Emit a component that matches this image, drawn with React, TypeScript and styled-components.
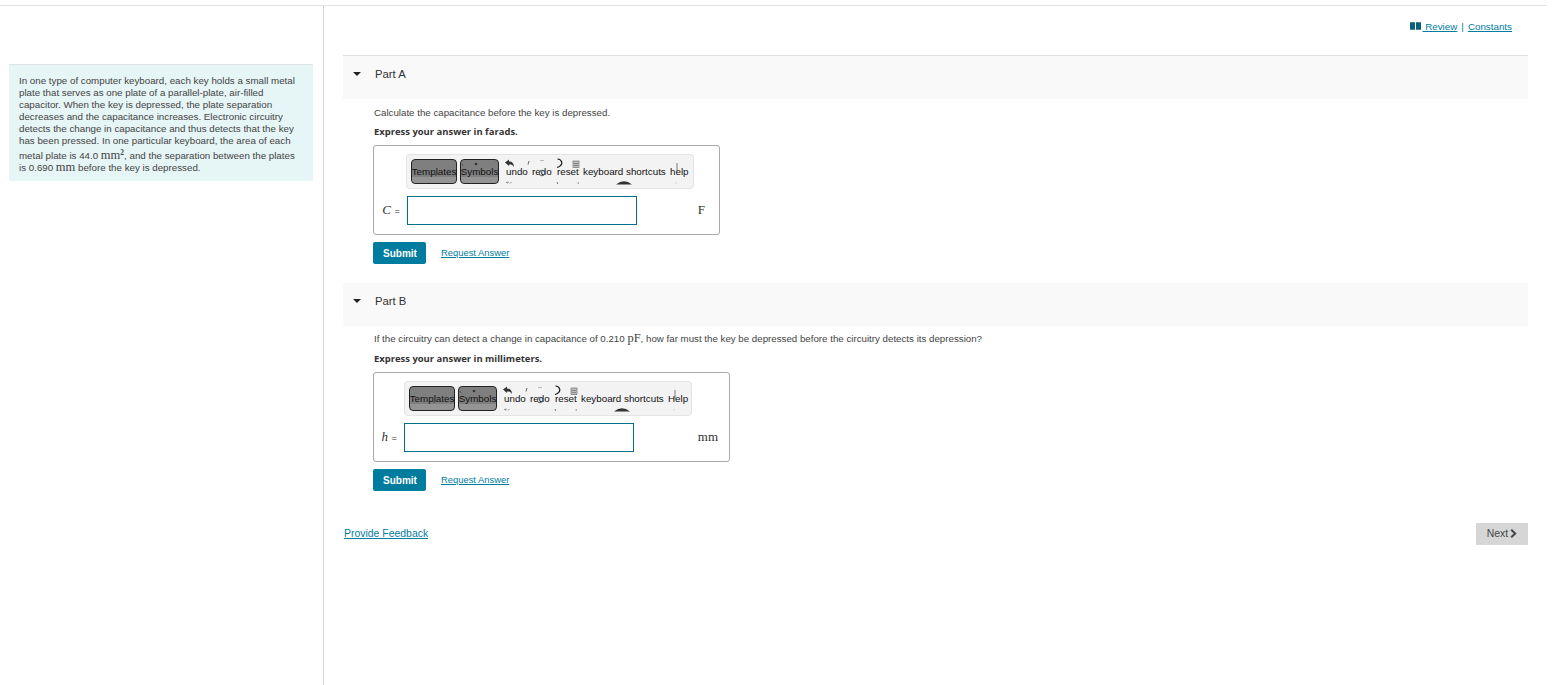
import React from "react";
import styled, { createGlobalStyle } from "styled-components";

const Global = createGlobalStyle`
  html, body { margin: 0; padding: 0; background: #fff; }
  body { font-family: "Liberation Sans", Arial, sans-serif; color: #333; overflow: hidden; }
`;

const Page = styled.div`
  margin-top: 5px;
  width: 1547px;
  height: 680px;
  border-top: 1px solid #e2e2e2;
  display: flex;
  box-sizing: border-box;
`;

const Sidebar = styled.aside`
  width: 324px;
  flex: none;
  box-sizing: border-box;
  border-right: 1px solid #cfd4da;
  padding: 58px 10px 0 9px;
`;

const Intro = styled.div`
  background: #e6f5f6;
  border-top: 1px solid #dfe5e6;
  padding: 10px 15px 0 10px;
  height: 117px;
  box-sizing: border-box;
  font-size: 9.75px;
  line-height: 12.1px;
  color: #444;
`;

const MathVar = styled.span`
  font-family: "Liberation Serif", "DejaVu Serif", serif;
  font-size: 12.5px;
  line-height: 0;
`;

const MathItalic = styled.i`
  font-family: "Liberation Serif", serif;
  font-size: 13px;
  color: #333;
  margin-right: 1px;
`;

const Sup = styled.sup`
  font-size: 7.5px;
  line-height: 10px;
  font-family: "Liberation Serif", serif;
  font-weight: bold;
`;

const Main = styled.main`
  flex: 1;
  min-width: 0;
  padding: 0 19px 0 19px;
`;

const TopLinks = styled.div`
  height: 49px;
  box-sizing: border-box;
  padding: 15px 16px 0 0;
  display: flex;
  justify-content: flex-end;
  align-items: flex-start;
  font-size: 9.8px;
  line-height: 12px;
  color: #007c9f;
`;

const LinkA = styled.a`
  color: #007c9f;
  text-decoration: underline;
  white-space: pre;
`;

const FeedbackLink = styled(LinkA)`
  margin-bottom: 2px;
`;

const Separator = styled.span`
  margin: 0 4px;
`;

const BookIcon = styled.svg`
  width: 11px;
  height: 8px;
  margin: 1px 1px 0 0;
  flex: none;
`;

const PartHeader = styled.div<{ $ruled?: boolean }>`
  height: ${(p) => (p.$ruled ? 44 : 43)}px;
  box-sizing: border-box;
  background: #f9f9f9;
  border-top: ${(p) => (p.$ruled ? "1px solid #e0e0e0" : "none")};
  display: flex;
  align-items: center;
  padding: 0 0 8px 10px;
  font-size: 11.3px;
  color: #333;
`;

const Caret = styled.span`
  width: 0;
  height: 0;
  border-left: 4px solid transparent;
  border-right: 4px solid transparent;
  border-top: 4px solid #222;
  margin-right: 14px;
`;

const PartBody = styled.section<{ $h: number; $top: number }>`
  padding: ${(p) => p.$top}px 0 0 30px;
  height: ${(p) => p.$h}px;
  box-sizing: border-box;
`;

const Prompt = styled.p`
  margin: 0;
  padding-left: 1px;
  font-size: 9.72px;
  line-height: 12px;
  color: #444;
`;

const Instruction = styled.p<{ $top: number }>`
  margin: ${(p) => p.$top}px 0 0;
  padding-left: 1px;
  font-family: "Open Sans", "Liberation Sans", sans-serif;
  font-weight: 700;
  font-size: 9.45px;
  line-height: 12px;
  color: #333;
`;

const AnswerBox = styled.div<{ $w: number }>`
  width: ${(p) => p.$w}px;
  height: 90px;
  margin-top: 7px;
  box-sizing: border-box;
  border: 1px solid #aaa;
  border-radius: 3px;
  padding: 8px 0 0 0;
  display: flex;
  flex-direction: column;
`;

const Toolbar = styled.div<{ $left: number }>`
  position: relative;
  margin-left: ${(p) => p.$left}px;
  width: 288px;
  height: 35px;
  box-sizing: border-box;
  background: #f3f3f3;
  border: 1px solid #e4e4e4;
  border-radius: 4px;
  flex: none;
  display: flex;
  align-items: center;
  padding-left: 4px;
  font-size: 9.8px;
  color: #111;
  overflow: hidden;
`;

const ToolButton = styled.span<{ $w: number }>`
  width: ${(p) => p.$w}px;
  height: 25px;
  box-sizing: border-box;
  border: 1px solid #222;
  border-radius: 4px;
  background: linear-gradient(#7f7f7f 0 76%, #949494 76% 100%);
  color: #111;
  margin-right: 3px;
  display: flex;
  align-items: center;
  justify-content: center;
  white-space: nowrap;
  flex: none;
`;

const ToolLabel = styled.span<{ $left: number }>`
  position: absolute;
  left: ${(p) => p.$left}px;
  top: 11px;
  line-height: 12px;
  white-space: nowrap;
`;

const ToolScraps = styled.svg`
  position: absolute;
  left: 0;
  top: 0;
  width: 288px;
  height: 35px;
  pointer-events: none;
`;

const InputRow = styled.div`
  display: flex;
  align-items: center;
  margin-top: 7px;
`;

const VarLabel = styled.label<{ $w: number }>`
  width: ${(p) => p.$w}px;
  flex: none;
  box-sizing: border-box;
  padding: 0 7px 2px 0;
  text-align: right;
  font-size: 9.4px;
  color: #333;
`;

const Field = styled.input`
  width: 230px;
  height: 29px;
  box-sizing: border-box;
  border: 1px solid #00708f;
  background: #fff;
  padding: 0;
  outline: none;
  flex: none;
`;

const Unit = styled.span<{ $right: number }>`
  margin: 0 ${(p) => p.$right}px 2px auto;
  font-family: "Liberation Serif", serif;
  font-size: 13px;
  color: #333;
`;

const Actions = styled.div`
  display: flex;
  align-items: center;
  margin-top: 7px;
`;

const Submit = styled.button`
  width: 53px;
  height: 22px;
  border: none;
  border-radius: 2px;
  padding: 0 0 0 1px;
  background: #007c9f;
  color: #fff;
  font-family: "Liberation Sans", sans-serif;
  font-weight: 700;
  font-size: 10px;
`;

const RequestLink = styled.a`
  margin: 0 0 2px 15px;
  font-size: 9.4px;
  color: #007c9f;
  text-decoration: underline;
`;

const Footer = styled.div`
  display: flex;
  justify-content: space-between;
  align-items: center;
  padding-left: 1px;
  font-size: 10.45px;
`;

const NextButton = styled.button`
  width: 52px;
  height: 22px;
  border: none;
  border-radius: 1px;
  background: #d6d6d6;
  color: #444;
  font-family: "Liberation Sans", sans-serif;
  font-size: 10.4px;
  padding: 0 0 2px;
  display: flex;
  align-items: center;
  justify-content: center;
  gap: 2px;
`;

const Scraps = () => (
  <ToolScraps viewBox="0 0 288 35" fill="none">
    <path d="M98 7.5 L102 4.5 V6.5 C105 6.5 107 8.5 107 12 C105.5 9.5 104 9.5 102 9.5 V11 Z" fill="#333" />
    <path d="M99 27.5 l2.5 -.3 -1.5 1.2 M103 28.5 l1.5 -1.6" stroke="#777" strokeWidth=".8" />
    <path d="M122 6 l-1 3.5" stroke="#555" strokeWidth=".9" />
    <path d="M133 5.5 h4" stroke="#aaa" strokeWidth=".8" />
    <circle cx="135" cy="18" r="2.8" stroke="#555" strokeWidth=".9" />
    <path d="M150.5 4 C155 4.5 156.5 9 152.5 11.5 L150 12.5" stroke="#222" strokeWidth="1.2" />
    <path d="M150 27 l.8 2 M170.5 28 h1.5" stroke="#666" strokeWidth=".9" />
    <rect x="166" y="6" width="6" height="6.5" fill="#bbb" stroke="#777" strokeWidth=".7" />
    <path d="M167 8.5 h4 M167 10.5 h4" stroke="#666" strokeWidth=".6" />
    <path d="M209 29.5 Q217 23 225 29.5 Z" fill="#333" />
    <path d="M270 8 v9" stroke="#555" strokeWidth=".8" />
    <path d="M268.5 28 h1" stroke="#aaa" strokeWidth=".8" />
    <circle cx="29" cy="20" r="1" fill="#555" />
    <circle cx="69" cy="9" r="1.3" fill="#333" />
    <path d="M55 9 l1 2" stroke="#444" strokeWidth=".8" />
  </ToolScraps>
);

const Tools = ({ left, help }: { left: number; help: string }) => (
  <Toolbar $left={left}>
    <ToolButton $w={46}>Templates</ToolButton>
    <ToolButton $w={39}>Symbols</ToolButton>
    <ToolLabel $left={99}>undo</ToolLabel>
    <ToolLabel $left={125}>redo</ToolLabel>
    <ToolLabel $left={150}>reset</ToolLabel>
    <ToolLabel $left={176}>keyboard shortcuts</ToolLabel>
    <ToolLabel $left={263}>{help}</ToolLabel>
    <Scraps />
  </Toolbar>
);

export default function App() {
  return (
    <>
      <Global />
      <Page>
        <Sidebar>
          <Intro>
            In one type of computer keyboard, each key holds a small metal plate that serves as one
            plate of a parallel-plate, air-filled capacitor. When the key is depressed, the plate
            separation decreases and the capacitance increases. Electronic circuitry detects the
            change in capacitance and thus detects that the key has been pressed. In one particular
            keyboard, the area of each metal plate is 44.0 <MathVar>mm</MathVar>
            <Sup>2</Sup>, and the separation between the plates is 0.690 <MathVar>mm</MathVar> before
            the key is depressed.
          </Intro>
        </Sidebar>
        <Main>
          <TopLinks>
            <BookIcon viewBox="0 0 12 8">
              <path d="M0 0h5.5v8H0zM6.5 0H12v8H6.5z" fill="#0b5f78" />
            </BookIcon>
            <LinkA href="#"> Review</LinkA>
            <Separator>|</Separator>
            <LinkA href="#">Constants</LinkA>
          </TopLinks>

          <PartHeader $ruled>
            <Caret />
            Part A
          </PartHeader>
          <PartBody $h={184} $top={8}>
            <Prompt>Calculate the capacitance before the key is depressed.</Prompt>
            <Instruction $top={7}>Express your answer in farads.</Instruction>
            <AnswerBox $w={347}>
              <Tools left={32} help="help" />
              <InputRow>
                <VarLabel $w={33}>
                  <MathItalic>C</MathItalic> =
                </VarLabel>
                <Field aria-label="C" />
                <Unit $right={14}>F</Unit>
              </InputRow>
            </AnswerBox>
            <Actions>
              <Submit>Submit</Submit>
              <RequestLink href="#">Request Answer</RequestLink>
            </Actions>
          </PartBody>

          <PartHeader>
            <Caret />
            Part B
          </PartHeader>
          <PartBody $h={197} $top={7}>
            <Prompt>
              If the circuitry can detect a change in capacitance of 0.210 <MathVar>pF</MathVar>, how
              far must the key be depressed before the circuitry detects its depression?
            </Prompt>
            <Instruction $top={8}>Express your answer in millimeters.</Instruction>
            <AnswerBox $w={357}>
              <Tools left={30} help="Help" />
              <InputRow>
                <VarLabel $w={30}>
                  <MathItalic>h</MathItalic> =
                </VarLabel>
                <Field aria-label="h" />
                <Unit $right={11}>mm</Unit>
              </InputRow>
            </AnswerBox>
            <Actions>
              <Submit>Submit</Submit>
              <RequestLink href="#">Request Answer</RequestLink>
            </Actions>
          </PartBody>

          <Footer>
            <FeedbackLink href="#">Provide Feedback</FeedbackLink>
            <NextButton>
              Next
              <svg width="7" height="9" viewBox="0 0 7 9">
                <path d="M1.2 .8 L5.2 4.5 L1.2 8.2" fill="none" stroke="#444" strokeWidth="2" />
              </svg>
            </NextButton>
          </Footer>
        </Main>
      </Page>
    </>
  );
}
